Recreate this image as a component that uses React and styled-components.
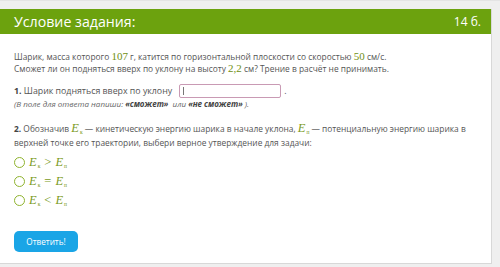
import React from 'react';
import styled, { createGlobalStyle } from 'styled-components';

const Global = createGlobalStyle`
  html, body {
    margin: 0;
    padding: 0;
    background: #efefef;
  }
  body {
    font-family: 'Open Sans', 'Liberation Sans', sans-serif;
  }
`;

const Page = styled.div`
  padding: 8px 8px 0 0;
  border-top: 1px solid #e4e4e4;
  height: 267px;
  box-sizing: border-box;
`;

const Card = styled.div`
  background: #fff;
  border-right: 1px solid #d8d8d8;
  border-bottom: 1px solid #d8d8d8;
  height: 255px;
  box-sizing: border-box;
`;

const Header = styled.div`
  height: 25px;
  background: #6ca20e;
  color: #fff;
  display: flex;
  align-items: center;
  justify-content: space-between;
  padding: 0 10px 0 14px;
`;

const Title = styled.span`
  font-size: 14.2px;
`;

const Points = styled.span`
  font-size: 12px;
`;

const Body = styled.div`
  padding: 17px 14px 0 14px;
  color: #555;
  font-size: 8.4px;
  line-height: 12px;
`;

const Para = styled.p`
  margin: ${(p) => p.top || 0}px 0 0 0;
  line-height: ${(p) => p.lh || 12}px;
`;

const Num = styled.span`
  font-family: 'Liberation Serif', 'DejaVu Serif', serif;
  font-size: 11px;
  line-height: 1;
  color: #6f8f12;
`;

const Row = styled.div`
  display: flex;
  align-items: center;
  gap: 3px;
  height: 14px;
  margin-top: 9px;
  font-size: 8.8px;
`;

const Bold = styled.b`
  font-weight: 700;
  color: #444;
`;

const Input = styled.div`
  width: 102px;
  height: 14px;
  border: 1px solid #c99ab4;
  border-radius: 2px;
  margin-left: 4px;
  box-sizing: border-box;
  position: relative;
  &::before {
    content: '';
    position: absolute;
    left: 3px;
    top: 2px;
    bottom: 2px;
    width: 1px;
    background: #777;
  }
`;

const Hint = styled.div`
  font-style: italic;
  font-size: 8px;
  color: #666;
`;

const Math = styled.span`
  font-family: 'Liberation Serif', 'DejaVu Serif', serif;
  font-style: italic;
  font-size: 12.5px;
  line-height: 1;
  color: #7a9a1c;
  white-space: nowrap;
`;

const Sub = styled.span`
  font-size: 5.5px;
  font-style: normal;
  position: relative;
  top: 2px;
  margin-left: 1px;
`;

const Op = styled.span`
  font-style: normal;
  margin: 0 4px;
`;

const Options = styled.div`
  display: flex;
  flex-direction: column;
  gap: 6px;
  margin-top: 6px;
`;

const Option = styled.label`
  display: flex;
  align-items: center;
  gap: 4px;
  height: 13px;
`;

const Radio = styled.span`
  width: 9px;
  height: 9px;
  border: 1.5px solid #8fb32e;
  border-radius: 50%;
`;

const Button = styled.button`
  display: block;
  margin-top: 24px;
  width: 64px;
  height: 21px;
  border: none;
  border-radius: 5px;
  background: #1aa5e6;
  color: #fff;
  font-family: 'Open Sans', 'Liberation Sans', sans-serif;
  font-size: 8.2px;
  padding: 0;
`;

function E({ sub }) {
  return (
    <>
      E<Sub>{sub}</Sub>
    </>
  );
}

export default function App() {
  return (
    <>
      <Global />
      <Page>
        <Card>
          <Header>
            <Title>Условие задания:</Title>
            <Points>14 б.</Points>
          </Header>
          <Body>
            <Para>
              Шарик, масса которого <Num>107</Num> г, катится по горизонтальной плоскости со
              скоростью <Num>50</Num> см/с.
              <br />
              Сможет ли он подняться вверх по уклону на высоту <Num>2,2</Num> см? Трение в
              расчёт не принимать.
            </Para>
            <Row>
              <span>
                <Bold>1.</Bold> Шарик подняться вверх по уклону
              </span>
              <Input />
              <span>.</span>
            </Row>
            <Hint>
              (В поле для ответа напиши: <Bold>«сможет»</Bold>&nbsp; или{' '}
              <Bold>«не сможет»</Bold> ).
            </Hint>
            <Para top={12} lh={14}>
              <Bold>2.</Bold> Обозначив{' '}
              <Math>
                <E sub="к" />
              </Math>{' '}
              — кинетическую энергию шарика в начале уклона,{' '}
              <Math>
                <E sub="п" />
              </Math>{' '}
              — потенциальную энергию шарика в
              <br />
              верхней точке его траектории, выбери верное утверждение для задачи:
            </Para>
            <Options>
              {['>', '=', '<'].map((op) => (
                <Option key={op}>
                  <Radio />
                  <Math>
                    <E sub="к" />
                    <Op>{op}</Op>
                    <E sub="п" />
                  </Math>
                </Option>
              ))}
            </Options>
            <Button>Ответить!</Button>
          </Body>
        </Card>
      </Page>
    </>
  );
}
